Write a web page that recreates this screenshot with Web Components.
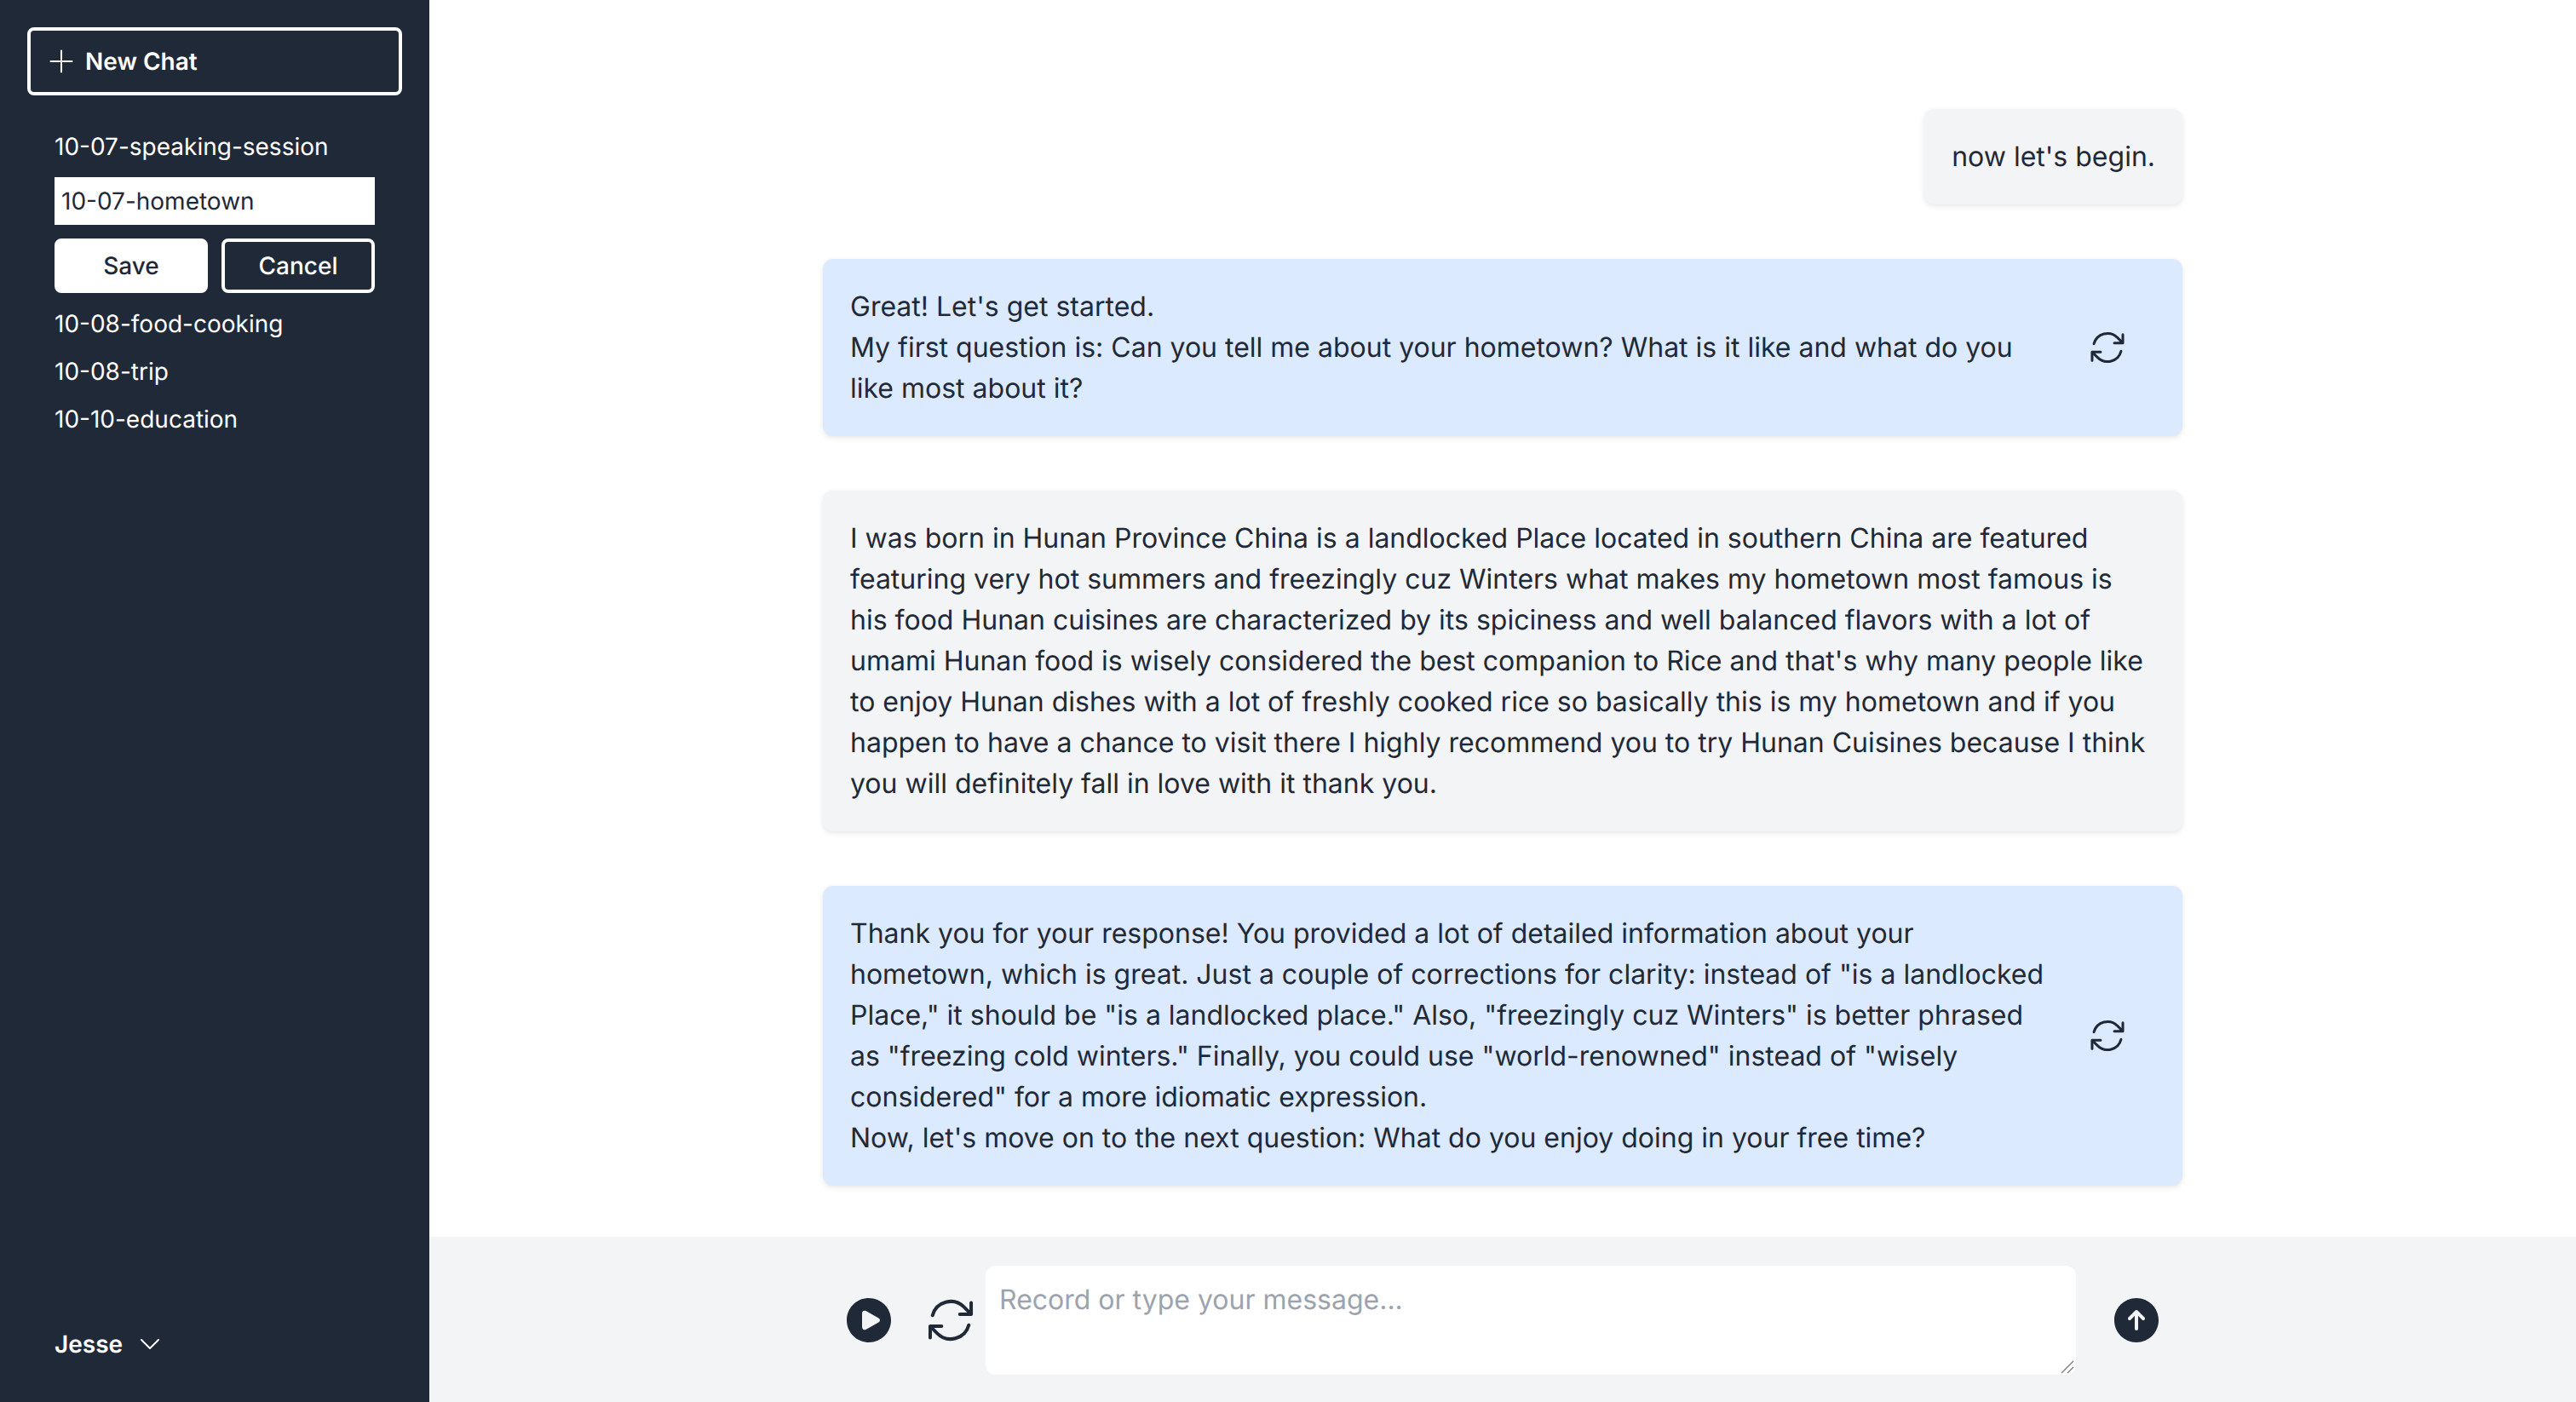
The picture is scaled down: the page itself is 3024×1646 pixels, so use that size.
<!DOCTYPE html>
<html lang="en">
<head>
<meta charset="utf-8">
<title>Speaking chat</title>
<style>
html, body { margin: 0; height: 100%; }
body { font-family: Inter, "Noto Sans", sans-serif; color: #1f2937; overflow: hidden; text-rendering: geometricPrecision; }
</style>
</head>
<body>
<chat-app>
  <chat-sidebar slot="side" user="Jesse">
    <session-item>10-07-speaking-session</session-item>
    <session-edit value="10-07-hometown"></session-edit>
    <session-item>10-08-food-cooking</session-item>
    <session-item>10-08-trip</session-item>
    <session-item>10-10-education</session-item>
  </chat-sidebar>

  <chat-message role="user" short>now let's begin.</chat-message>
  <chat-message role="bot">Great! Let's get started.<br>My first question is: Can you tell me about your hometown? What is it like and what do you like most about it?</chat-message>
  <chat-message role="user">I was born in Hunan Province China is a landlocked Place located in southern China are featured featuring very hot summers and freezingly cuz Winters what makes my hometown most famous is his food Hunan cuisines are characterized by its spiciness and well balanced flavors with a lot of umami Hunan food is wisely considered the best companion to Rice and that's why many people like to enjoy Hunan dishes with a lot of freshly cooked rice so basically this is my hometown and if you happen to have a chance to visit there I highly recommend you to try Hunan Cuisines because I think you will definitely fall in love with it thank you.</chat-message>
  <chat-message role="bot">Thank you for your response! You provided a lot of detailed information about your hometown, which is great. Just a couple of corrections for clarity: instead of "is a landlocked Place," it should be "is a landlocked place." Also, "freezingly cuz Winters" is better phrased as "freezing cold winters." Finally, you could use "world-renowned" instead of "wisely considered" for a more idiomatic expression.<br>Now, let's move on to the next question: What do you enjoy doing in your free time?</chat-message>

  <chat-composer slot="composer" placeholder="Record or type your message..."></chat-composer>
</chat-app>

<script>
const REFRESH_PATH = "M16.023 9.348h4.992v-.001M2.985 19.644v-4.992m0 0h4.992m-4.993 0 3.181 3.183a8.25 8.25 0 0 0 13.803-3.7M4.031 9.865a8.25 8.25 0 0 1 13.803-3.7l3.181 3.182m0-4.991v4.99";

function refreshIcon(size) {
  return `<svg width="${size}" height="${size}" viewBox="0 0 24 24" fill="none" stroke="#1f2937" stroke-width="1.5" stroke-linecap="round" stroke-linejoin="round"><path d="${REFRESH_PATH}"/></svg>`;
}

class ChatApp extends HTMLElement {
  constructor() {
    super();
    this.attachShadow({ mode: "open" });
    this.shadowRoot.innerHTML = `
<style>
:host { display: flex; height: 100vh; background: #fff; }
.main { flex: 1; min-width: 0; display: flex; flex-direction: column; }
.messages { flex: 1; min-height: 0; display: flex; flex-direction: column; gap: 64px; width: 1596px; margin: 0 auto; padding-top: 128px; box-sizing: border-box; }
</style>
<slot name="side"></slot>
<div class="main">
  <div class="messages"><slot></slot></div>
  <slot name="composer"></slot>
</div>`;
  }
}

class ChatSidebar extends HTMLElement {
  constructor() {
    super();
    this.attachShadow({ mode: "open" });
    this.shadowRoot.innerHTML = `
<style>
:host { display: flex; flex-direction: column; flex: none; width: 504px; height: 100vh; box-sizing: border-box; padding: 32px; background: #1f2937; color: #fff; font-size: 28px; line-height: 40px; }
.new { display: flex; align-items: center; gap: 8px; height: 80px; box-sizing: border-box; padding: 0 16px; border: 4px solid #fff; border-radius: 8px; font-weight: 600; }
.list { flex: 1; display: flex; flex-direction: column; margin-top: 32px; padding: 0 32px; }
.user { display: flex; align-items: center; gap: 16px; padding: 0 32px; height: 40px; margin-bottom: 16px; font-weight: 600; }
svg { display: block; flex: none; }
</style>
<div class="new">
  <svg width="40" height="40" viewBox="0 0 24 24" fill="none" stroke="#fff" stroke-width="1.2" stroke-linecap="round" stroke-linejoin="round"><path d="M12 4.5v15m7.5-7.5h-15"/></svg>
  <span>New Chat</span>
</div>
<div class="list"><slot></slot></div>
<div class="user">
  <span>${this.getAttribute("user")}</span>
  <svg width="32" height="32" viewBox="0 0 24 24" fill="none" stroke="#fff" stroke-width="1.5" stroke-linecap="round" stroke-linejoin="round"><path d="m19.5 8.25-7.5 7.5-7.5-7.5"/></svg>
</div>`;
  }
}

class SessionItem extends HTMLElement {
  constructor() {
    super();
    this.attachShadow({ mode: "open" });
    this.shadowRoot.innerHTML = `
<style>
:host { display: block; padding: 8px 0; font-weight: 400; white-space: nowrap; }
</style>
<slot></slot>`;
  }
}

class SessionEdit extends HTMLElement {
  constructor() {
    super();
    this.attachShadow({ mode: "open" });
    this.shadowRoot.innerHTML = `
<style>
:host { display: flex; flex-direction: column; gap: 16px; padding: 8px 0; }
input { display: block; width: 100%; height: 56px; box-sizing: border-box; padding: 0 8px; border: 0; border-radius: 0; background: #fff; color: #1f2937; font: 400 28px/40px Inter, sans-serif; text-rendering: geometricPrecision; outline: none; }
.row { display: flex; gap: 16px; }
.btn { flex: 1; height: 64px; box-sizing: border-box; border-radius: 8px; border: 4px solid #fff; font: 500 28px/40px Inter, sans-serif; display: flex; align-items: center; justify-content: center; }
.save { background: #fff; color: #1f2937; }
.cancel { background: transparent; color: #fff; }
</style>
<input type="text" value="${this.getAttribute("value")}">
<div class="row">
  <div class="btn save">Save</div>
  <div class="btn cancel">Cancel</div>
</div>`;
  }
}

class ChatMessage extends HTMLElement {
  constructor() {
    super();
    this.attachShadow({ mode: "open" });
    const bot = this.getAttribute("role") === "bot";
    this.shadowRoot.innerHTML = `
<style>
:host { display: flex; align-items: center; flex: none; box-sizing: border-box; padding: 32px; border-radius: 12px; font-size: 32px; line-height: 48px; color: #1f2937; background: #f3f4f6; box-shadow: 0 2px 6px rgba(0,0,0,.1); }
:host([role="bot"]) { background: #dbeafe; }
:host([short]) { align-self: flex-end; }
.text { flex: 1; min-width: 0; }
.again { flex: none; margin: 0 32px; }
svg { display: block; }
</style>
<div class="text"><slot></slot></div>
${bot ? `<div class="again">${refreshIcon(48)}</div>` : ""}`;
  }
}

class ChatComposer extends HTMLElement {
  constructor() {
    super();
    this.attachShadow({ mode: "open" });
    this.shadowRoot.innerHTML = `
<style>
:host { display: block; flex: none; height: 194px; box-sizing: border-box; padding-top: 34px; background: #f3f4f6; }
.row { display: flex; align-items: center; width: 1596px; margin: 0 auto; padding: 0 22px; box-sizing: border-box; height: 128px; }
.field { position: relative; margin-left: 9px; width: 1280px; height: 128px; }
textarea { display: block; width: 100%; height: 100%; box-sizing: border-box; padding: 16px; border: 0; border-radius: 12px; background: #fff; color: #1f2937; font: 400 32px/48px Inter, sans-serif; text-rendering: geometricPrecision; outline: none; resize: none; }
textarea::placeholder { color: #9ca3af; opacity: 1; }
.grip { position: absolute; right: 2px; bottom: 1px; }
.refresh { margin-left: 32px; }
.send { margin-left: 39px; }
svg { display: block; flex: none; }
</style>
<div class="row">
  <svg class="play" width="64" height="64" viewBox="0 0 24 24" fill="#1f2937"><path fill-rule="evenodd" clip-rule="evenodd" d="M2.25 12c0-5.385 4.365-9.75 9.75-9.75s9.75 4.365 9.75 9.75-4.365 9.75-9.75 9.75S2.25 17.385 2.25 12Zm14.024-.983a1.125 1.125 0 0 1 0 1.966l-5.603 3.113A1.125 1.125 0 0 1 9 15.113V8.887c0-.857.921-1.4 1.671-.983l5.603 3.113Z"/></svg>
  <div class="refresh">${refreshIcon(64)}</div>
  <div class="field">
    <textarea placeholder="${this.getAttribute("placeholder")}"></textarea>
    <svg class="grip" width="16" height="16" viewBox="0 0 16 16" fill="none" stroke="#767676" stroke-width="1.2"><path d="M1 15 15 1M8 15l7-7"/></svg>
  </div>
  <svg class="send" width="64" height="64" viewBox="0 0 24 24" fill="#1f2937"><path fill-rule="evenodd" clip-rule="evenodd" d="M12 2.25c-5.385 0-9.75 4.365-9.75 9.75s4.365 9.75 9.75 9.75 9.75-4.365 9.75-9.75S17.385 2.25 12 2.25Zm-.53 5.47a.75.75 0 0 1 1.06 0l3 3a.75.75 0 1 1-1.06 1.06l-1.72-1.72v5.69a.75.75 0 0 1-1.5 0v-5.69l-1.72 1.72a.75.75 0 1 1-1.06-1.06l3-3Z"/></svg>
</div>`;
  }
}

customElements.define("chat-app", ChatApp);
customElements.define("chat-sidebar", ChatSidebar);
customElements.define("session-item", SessionItem);
customElements.define("session-edit", SessionEdit);
customElements.define("chat-message", ChatMessage);
customElements.define("chat-composer", ChatComposer);
</script>
</body>
</html>
